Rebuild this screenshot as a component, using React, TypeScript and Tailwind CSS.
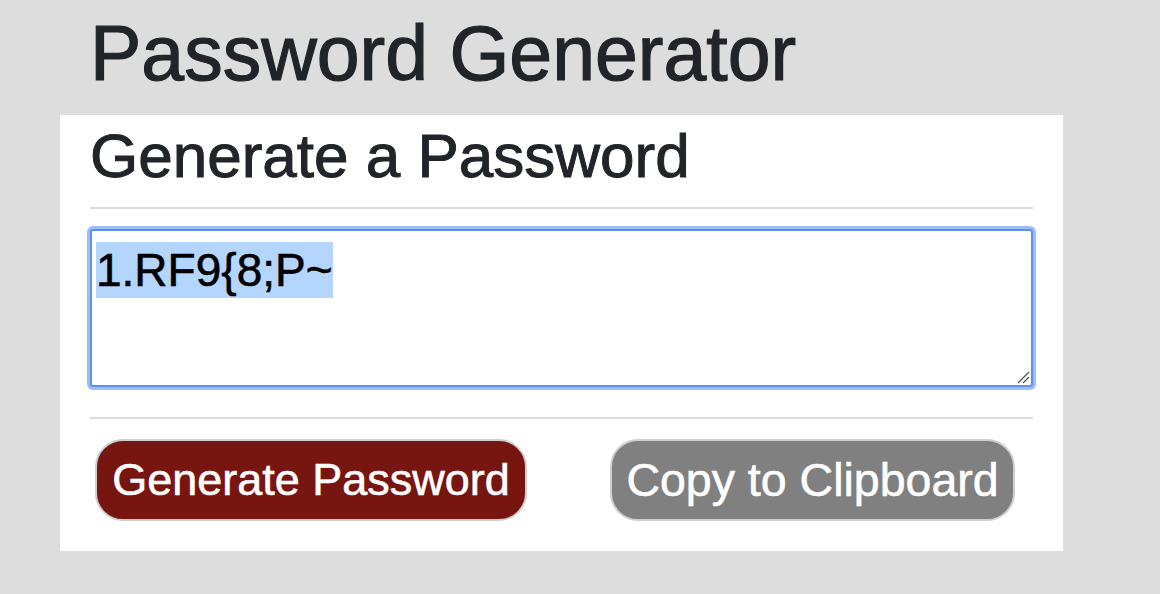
export default function App() {
  return (
    <div className="min-h-[594px] bg-[#dddddd] font-['Liberation_Sans',Arial,sans-serif] text-[#212529] overflow-hidden">
      <div className="w-[1003px] ml-[60px]">
        <h1 className="text-[77px] leading-[92px] pt-[7px] pl-[30px] mb-[16px] font-normal [-webkit-text-stroke:1.2px_#212529]">Password Generator</h1>
        <div className="bg-white px-[30px] pt-[4px] pb-[30px]">
          <h2 className="text-[62px] leading-[74px] font-normal [-webkit-text-stroke:1px_#212529]">Generate a Password</h2>
          <div className="h-[2px] bg-[#dcdcdc] mt-[14px]" />
          <div className="mt-[20px] relative h-[158px] rounded-[3px] border-2 border-[#5e8ff0] shadow-[0_0_0_3px_#9ebdf6] bg-white pl-[4px] pt-[11px]">
            <span className="text-[46px] leading-[56px] bg-[#b4d5fe] text-black inline-block [-webkit-text-stroke:0.6px_#000]">1.RF9{"{"}8;P~</span>
            <svg className="absolute right-[1px] bottom-[1px]" width="14" height="14" viewBox="0 0 14 14">
              <line x1="2" y1="13" x2="13" y2="2" stroke="#555" strokeWidth="1.2" />
              <line x1="7" y1="13" x2="13" y2="7" stroke="#555" strokeWidth="1.2" />
            </svg>
          </div>
          <div className="h-[2px] bg-[#dcdcdc] mt-[30px]" />
          <div className="flex mt-[20px]">
            <button className="ml-[5px] w-[432px] h-[82px] rounded-[28px] border-2 border-[#cfcfcf] bg-[#771511] text-white text-[45px] leading-[52px] [-webkit-text-stroke:0.6px_#fff]">Generate Password</button>
            <button className="ml-[83px] w-[405px] h-[82px] rounded-[28px] border-2 border-[#cfcfcf] bg-[#808080] text-white text-[46.5px] leading-[52px] [-webkit-text-stroke:0.6px_#fff]">Copy to Clipboard</button>
          </div>
        </div>
      </div>
    </div>
  );
}
